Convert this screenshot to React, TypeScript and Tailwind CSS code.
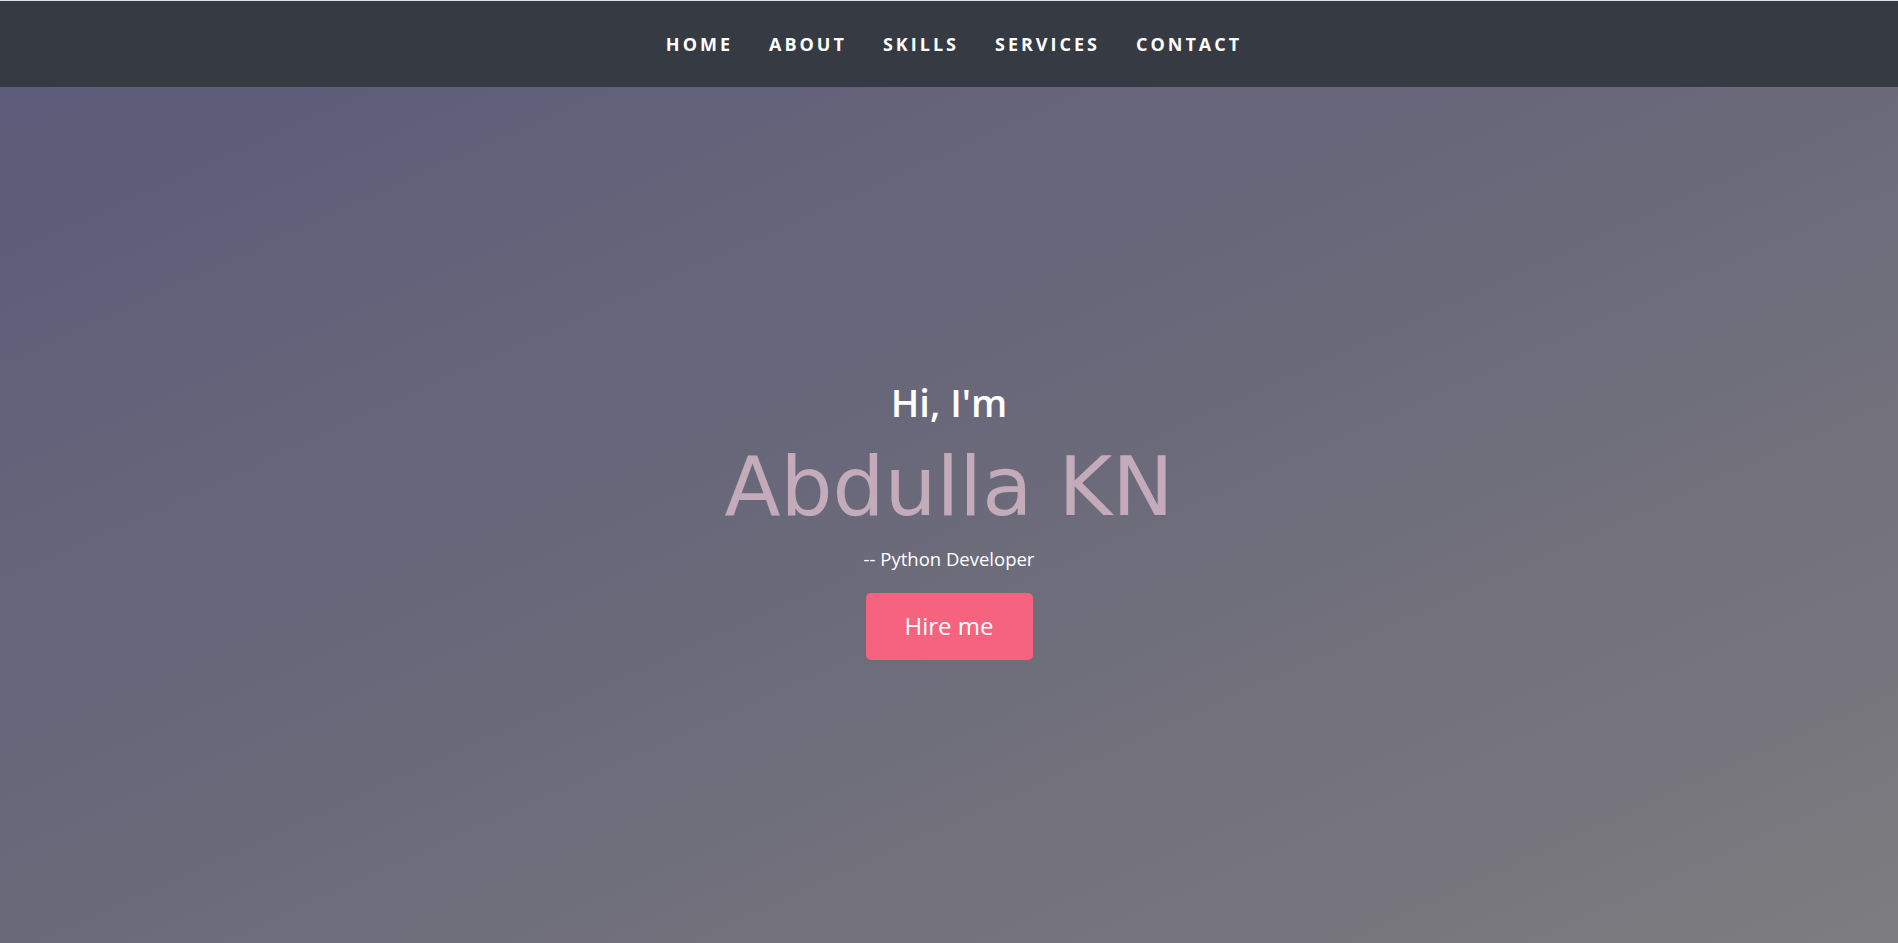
const links = ["HOME", "ABOUT", "SKILLS", "SERVICES", "CONTACT"];

const App = () => {
  return (
    <div className="flex h-screen flex-col font-['Open_Sans',sans-serif]">
      {/* ── top nav ── */}
      <nav className="flex h-[87px] shrink-0 items-center justify-center border-t border-[#dedede] bg-[#353a43]">
        <ul className="flex items-center pl-[10px]">
          {links.map((l) => (
            <li key={l}>
              <a
                href="#"
                className="px-[18px] text-[18px] font-bold tracking-[3px] text-white"
              >
                {l}
              </a>
            </li>
          ))}
        </ul>
      </nav>

      {/* ── hero ── */}
      <section className="flex flex-1 flex-col items-center justify-center bg-linear-to-br from-[#5d5c7a] via-[#6b6a7a] to-[#7d7c7f] pt-[8px] text-center">
        <h3 className="text-[38px] font-semibold leading-[46px] text-white">
          Hi, I'm
        </h3>
        <h1 className="mt-[21px] font-['DejaVu_Sans',sans-serif] text-[82px] font-normal leading-[82px] text-[#c3abb9]">
          Abdulla KN
        </h1>
        <p className="mt-[18px] text-[18.5px] leading-[26px] text-white">
          -- Python Developer
        </p>
        <button className="mt-[21px] flex h-[67px] w-[167px] items-center justify-center rounded-[5px] bg-[#f5637e] text-[24px] text-white">
          Hire me
        </button>
      </section>
    </div>
  );
};

export default App;
